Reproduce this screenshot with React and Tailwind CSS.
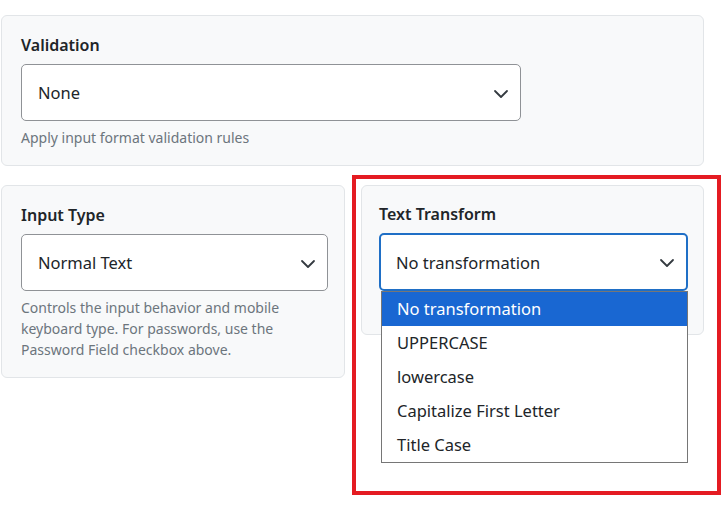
import React from "react";

const transformOptions = [
  "No transformation",
  "UPPERCASE",
  "lowercase",
  "Capitalize First Letter",
  "Title Case",
];

function Chevron() {
  return (
    <svg width="16" height="16" viewBox="0 0 16 16" fill="none" className="shrink-0">
      <path d="m2 5 6 6 6-6" stroke="#343a40" strokeWidth="1.8" strokeLinecap="round" strokeLinejoin="round" />
    </svg>
  );
}

function SelectBox({ value, focused, className }) {
  return (
    <div
      className={
        "flex h-[57px] items-center justify-between rounded-[5px] bg-white pl-4 pr-[11px] pt-[2px] text-[16.5px] text-[#212529] " +
        (focused ? "h-[58px] border-2 border-[#1f6fc6] pl-[15px] pr-[10px]" : "border border-[#8f9296]") +
        " " +
        className
      }
    >
      <span>{value}</span>
      <Chevron />
    </div>
  );
}

function Label({ children }) {
  return <div className="mb-[7px] pt-[2px] text-[16px] leading-6 font-semibold text-[#212529]">{children}</div>;
}

function Helper({ children }) {
  return <p className="mt-[6px] text-[14px] leading-[21px] text-[#6c757d]">{children}</p>;
}

export default function App() {
  return (
    <div
      className="relative h-[512px] w-[728px] overflow-hidden bg-white"
      style={{ fontFamily: '"Noto Sans", "Open Sans", sans-serif' }}
    >
      <div className="ml-px pt-[15px] w-[703px]">
        {/* Validation */}
        <div className="rounded-md border border-[#e2e5e8] bg-[#f8f9fa] pt-[15px] pb-[17px] pl-[19px] pr-4">
          <Label>Validation</Label>
          <SelectBox value="None" className="w-[500px]" />
          <Helper>Apply input format validation rules</Helper>
        </div>

        <div className="mt-[19px] flex items-start gap-4">
          {/* Input Type */}
          <div className="w-[344px] rounded-md border border-[#e2e5e8] bg-[#f8f9fa] pt-[15px] pb-[17px] pl-[19px] pr-4">
            <Label>Input Type</Label>
            <SelectBox value="Normal Text" />
            <Helper>
              Controls the input behavior and mobile keyboard type. For passwords, use the Password Field
              checkbox above.
            </Helper>
          </div>

          {/* Text Transform */}
          <div className="relative w-[343px] rounded-md border border-[#e2e5e8] bg-[#f8f9fa] pt-[14px] pb-[17px] pl-[17px] pr-[15px]">
            <Label>Text Transform</Label>
            <div className="relative">
              <SelectBox value="No transformation" focused />
              <ul className="absolute left-[2px] right-0 top-full z-10 border border-[#767676] bg-white text-[16.5px] text-[#212529]">
                {transformOptions.map((opt, i) => (
                  <li
                    key={opt}
                    className={
                      "flex h-[34px] items-center pl-[15px] pt-[1px] " + (i === 0 ? "bg-[#1967d2] text-white" : "")
                    }
                  >
                    {opt}
                  </li>
                ))}
              </ul>
            </div>
            <div className="mt-[5px] h-[21px]" />
          </div>
        </div>
      </div>

      {/* highlight annotation */}
      <div className="pointer-events-none absolute left-[352px] top-[175px] h-[320px] w-[369px] border-[4.5px] border-[#e41b22]" />
    </div>
  );
}
